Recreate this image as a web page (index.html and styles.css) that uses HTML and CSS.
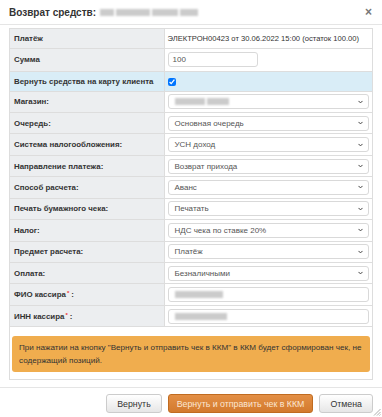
FILE: index.html
```html
<!DOCTYPE html>
<html lang="ru">
<head>
    <meta charset="UTF-8">
    <title>Возврат средств</title>
    <link rel="stylesheet" href="styles.css">
</head>
<body>
<div class="dialog">
    <div class="dlg-head">
        <span class="dlg-title">Возврат средств:</span>
        <span class="redacted title-redacted"><i style="width:14px"></i><i style="width:34px"></i><i style="width:26px"></i><i style="width:18px"></i></span>
        <span class="dlg-close">×</span>
    </div>

    <div class="dlg-body">
        <div class="panel">
            <table class="form-table">
                <tr class="r-pay">
                    <td class="lbl">Платёж</td>
                    <td class="val">ЭЛЕКТРОН00423 от 30.06.2022 15:00 (остаток 100.00)</td>
                </tr>
                <tr class="r-sum">
                    <td class="lbl">Сумма</td>
                    <td class="val"><div class="ctl ctl-short">100</div></td>
                </tr>
                <tr class="r-card info">
                    <td class="lbl">Вернуть средства на карту клиента</td>
                    <td class="val"><input type="checkbox" class="chk" checked></td>
                </tr>
                <tr>
                    <td class="lbl">Магазин:</td>
                    <td class="val"><div class="ctl sel"><span class="redacted"><i style="width:30px"></i><i style="width:22px"></i></span><svg class="chev" viewBox="0 0 6 4"><path d="M0.6 0.7 L3 3.1 L5.4 0.7"/></svg></div></td>
                </tr>
                <tr>
                    <td class="lbl">Очередь:</td>
                    <td class="val"><div class="ctl sel"><span>Основная очередь</span><svg class="chev" viewBox="0 0 6 4"><path d="M0.6 0.7 L3 3.1 L5.4 0.7"/></svg></div></td>
                </tr>
                <tr>
                    <td class="lbl">Система налогообложения:</td>
                    <td class="val"><div class="ctl sel"><span>УСН доход</span><svg class="chev" viewBox="0 0 6 4"><path d="M0.6 0.7 L3 3.1 L5.4 0.7"/></svg></div></td>
                </tr>
                <tr>
                    <td class="lbl">Направление платежа:</td>
                    <td class="val"><div class="ctl sel"><span>Возврат прихода</span><svg class="chev" viewBox="0 0 6 4"><path d="M0.6 0.7 L3 3.1 L5.4 0.7"/></svg></div></td>
                </tr>
                <tr>
                    <td class="lbl">Способ расчета:</td>
                    <td class="val"><div class="ctl sel"><span>Аванс</span><svg class="chev" viewBox="0 0 6 4"><path d="M0.6 0.7 L3 3.1 L5.4 0.7"/></svg></div></td>
                </tr>
                <tr>
                    <td class="lbl">Печать бумажного чека:</td>
                    <td class="val"><div class="ctl sel"><span>Печатать</span><svg class="chev" viewBox="0 0 6 4"><path d="M0.6 0.7 L3 3.1 L5.4 0.7"/></svg></div></td>
                </tr>
                <tr>
                    <td class="lbl">Налог:</td>
                    <td class="val"><div class="ctl sel"><span>НДС чека по ставке 20%</span><svg class="chev" viewBox="0 0 6 4"><path d="M0.6 0.7 L3 3.1 L5.4 0.7"/></svg></div></td>
                </tr>
                <tr>
                    <td class="lbl">Предмет расчета:</td>
                    <td class="val"><div class="ctl sel"><span>Платёж</span><svg class="chev" viewBox="0 0 6 4"><path d="M0.6 0.7 L3 3.1 L5.4 0.7"/></svg></div></td>
                </tr>
                <tr>
                    <td class="lbl">Оплата:</td>
                    <td class="val"><div class="ctl sel"><span>Безналичными</span><svg class="chev" viewBox="0 0 6 4"><path d="M0.6 0.7 L3 3.1 L5.4 0.7"/></svg></div></td>
                </tr>
                <tr>
                    <td class="lbl">ФИО кассира<sup class="req">*</sup>:</td>
                    <td class="val"><div class="ctl"><span class="redacted"><i style="width:48px"></i></span></div></td>
                </tr>
                <tr>
                    <td class="lbl">ИНН кассира<sup class="req">*</sup>:</td>
                    <td class="val"><div class="ctl"><span class="redacted"><i style="width:52px"></i></span></div></td>
                </tr>
            </table>
            <div class="alert">При нажатии на кнопку "Вернуть и отправить чек в ККМ" в ККМ будет сформирован чек, не содержащий позиций.</div>
        </div>
    </div>

    <div class="dlg-foot">
        <button class="btn">Вернуть</button>
        <button class="btn btn-warn">Вернуть и отправить чек в ККМ</button>
        <button class="btn">Отмена</button>
    </div>

    <svg class="grip" viewBox="0 0 8 8"><path d="M7.5 1 L1 7.5 M7.5 4 L4 7.5 M7.5 6.5 L6.5 7.5"/></svg>
</div>
</body>
</html>
```

FILE: styles.css
```css
* {
    box-sizing: border-box;
}
body {
    margin: 0;
    background: #fff;
    font-family: "Liberation Sans", Arial, sans-serif;
    color: #333;
}
.dialog {
    position: relative;
    width: 382px;
    height: 417px;
    overflow: hidden;
}
.dlg-head {
    height: 25px;
    display: flex;
    align-items: center;
    padding: 0 10px 0 9px;
    border-bottom: 1px solid #e5e5e5;
}
.dlg-title {
    font-size: 10px;
    font-weight: bold;
    color: #333;
}
.title-redacted {
    margin-left: 4px;
    height: 10px;
}
.title-redacted i {
    background: #bdbdbd;
}
.dlg-close {
    margin-left: auto;
    color: #777;
    font-size: 12px;
    font-weight: bold;
}
.redacted {
    display: inline-flex;
    gap: 2px;
    height: 7px;
    filter: blur(1px);
}
.redacted i {
    display: block;
    background: #cbcbcb;
}
.dlg-body {
    padding: 3px 9px 0;
}
.panel {
    border: 1px solid #ddd;
    height: 352px;
}
.form-table {
    width: 100%;
    border-collapse: collapse;
    table-layout: fixed;
}
.form-table td {
    border-bottom: 1px solid #ddd;
    font-size: 7.6px;
    height: 21.45px;
    padding: 0 3px;
}
.form-table td.lbl {
    width: 154px;
    background: #eceef0;
    font-weight: bold;
    font-size: 7.9px;
    padding-left: 4px;
    border-right: 1px solid #ddd;
    color: #333;
}
.form-table .r-pay td {
    height: 19px;
}
.form-table .r-sum td {
    height: 23px;
}
.form-table .r-card td {
    height: 20px;
}
.form-table tr.info td {
    background: #d9edf7;
}
.ctl {
    height: 15px;
    border: 1px solid #d9d9d9;
    border-radius: 3px;
    background: #fff;
    display: flex;
    align-items: center;
    padding: 0 5px 0 6px;
    color: #555;
    font-size: 8px;
}
.ctl-short {
    width: 90px;
    padding-left: 4px;
}
.sel {
    justify-content: space-between;
}
.chev {
    width: 5px;
    height: 4px;
    fill: none;
    stroke: #444;
    stroke-width: 1.2;
}
.chk {
    margin: 0;
    width: 8px;
    height: 8px;
    vertical-align: middle;
}
.req {
    color: #e33;
    font-size: 6px;
    vertical-align: top;
    margin-left: 1px;
    margin-right: 2px;
}
.alert {
    margin: 9px 2px 0;
    background: #f0ad4e;
    border-radius: 3px;
    color: #333;
    font-size: 8.1px;
    line-height: 13px;
    padding: 5px 7px;
}
.dlg-foot {
    margin-top: 7px;
    border-top: 1px solid #e5e5e5;
    padding: 6px 9px 0;
    display: flex;
    justify-content: flex-end;
    gap: 6px;
}
.btn {
    height: 19px;
    padding: 0 10px;
    font-family: "Liberation Sans", Arial, sans-serif;
    font-size: 8.8px;
    color: #333;
    background: linear-gradient(#fff, #e6e6e6);
    border: 1px solid #ccc;
    border-radius: 3px;
}
.btn-warn {
    padding: 0 8px;
    color: #fbe6d2;
    background: linear-gradient(#e38f45, #d37a2e);
    border-color: #c06b20;
}
.grip {
    position: absolute;
    right: 1px;
    bottom: 1px;
    width: 8px;
    height: 8px;
    fill: none;
    stroke: #999;
    stroke-width: 0.8;
}
```
